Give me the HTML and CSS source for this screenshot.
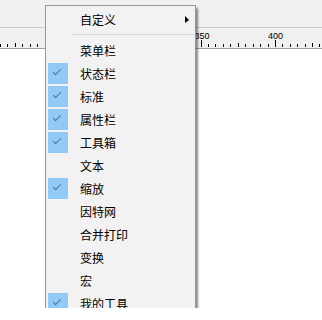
FILE: index.html
```html
<!DOCTYPE html>
<html lang="zh-CN">
<head>
    <meta charset="UTF-8">
    <title>自定义菜单</title>
    <link rel="stylesheet" href="styles.css">
</head>
<body>
    <div class="toolbar"></div>

    <div class="ruler">
        <svg class="ruler-svg" width="322" height="20" shape-rendering="crispEdges">
            <g class="tick">
                <line x1="0.5" y1="16" x2="0.5" y2="19"/>
                <line x1="7.5" y1="16" x2="7.5" y2="19"/>
                <line x1="15.5" y1="15" x2="15.5" y2="19"/>
                <line x1="22.5" y1="16" x2="22.5" y2="19"/>
                <line x1="30.5" y1="16" x2="30.5" y2="19"/>
                <line x1="37.5" y1="16" x2="37.5" y2="19"/>
                <line x1="201.5" y1="12" x2="201.5" y2="19"/>
                <line x1="208.5" y1="16" x2="208.5" y2="19"/>
                <line x1="215.5" y1="16" x2="215.5" y2="19"/>
                <line x1="223.5" y1="16" x2="223.5" y2="19"/>
                <line x1="230.5" y1="16" x2="230.5" y2="19"/>
                <line x1="238.5" y1="15" x2="238.5" y2="19"/>
                <line x1="245.5" y1="16" x2="245.5" y2="19"/>
                <line x1="253.5" y1="16" x2="253.5" y2="19"/>
                <line x1="260.5" y1="16" x2="260.5" y2="19"/>
                <line x1="268.5" y1="16" x2="268.5" y2="19"/>
                <line x1="275.5" y1="12" x2="275.5" y2="19"/>
                <line x1="282.5" y1="16" x2="282.5" y2="19"/>
                <line x1="290.5" y1="16" x2="290.5" y2="19"/>
                <line x1="297.5" y1="16" x2="297.5" y2="19"/>
                <line x1="305.5" y1="16" x2="305.5" y2="19"/>
                <line x1="312.5" y1="15" x2="312.5" y2="19"/>
                <line x1="319.5" y1="16" x2="319.5" y2="19"/>
            </g>
            <text class="ruler-label" x="202" y="10.5">350</text>
            <text class="ruler-label" x="275.5" y="10.5">400</text>
        </svg>
    </div>

    <div class="canvas"></div>

    <!-- popup menu, cut off by the bottom of the capture -->
    <div class="menu-clip">
        <ul class="menu">
            <li class="item has-sub"><span class="box"></span><span class="label">自定义</span><span class="sub-arrow"></span></li>
            <li class="separator"></li>
            <li class="item"><span class="box"></span><span class="label">菜单栏</span></li>
            <li class="item checked"><span class="box"></span><span class="label">状态栏</span></li>
            <li class="item checked"><span class="box"></span><span class="label">标准</span></li>
            <li class="item checked"><span class="box"></span><span class="label">属性栏</span></li>
            <li class="item checked"><span class="box"></span><span class="label">工具箱</span></li>
            <li class="item"><span class="box"></span><span class="label">文本</span></li>
            <li class="item checked"><span class="box"></span><span class="label">缩放</span></li>
            <li class="item"><span class="box"></span><span class="label">因特网</span></li>
            <li class="item"><span class="box"></span><span class="label">合并打印</span></li>
            <li class="item"><span class="box"></span><span class="label">变换</span></li>
            <li class="item"><span class="box"></span><span class="label">宏</span></li>
            <li class="item checked"><span class="box"></span><span class="label">我的工具</span></li>
        </ul>
    </div>
</body>
</html>
```

FILE: styles.css
```css
body { margin: 0; padding: 0; background-color: #ffffff; font-family: "Noto Sans CJK SC", "Noto Sans", sans-serif; overflow: hidden; }

.toolbar { height: 27px; background-color: #f0f0f0; border-bottom: 1px solid #cdcdcd; }
.ruler { height: 20px; background-color: #f0f0f0; border-bottom: 1px solid #a0a0a0; }
.ruler-svg { display: block; }
.tick line { stroke: #000000; stroke-width: 1; }
.ruler-label { font-family: "Liberation Sans", Arial, sans-serif; font-size: 9px; fill: #000000; text-anchor: middle; }
.canvas { height: 272px; background-color: #ffffff; }

/* Popup menu */
.menu-clip {
    position: absolute;
    left: 45px;
    top: 0;
    width: 160px;
    height: 308px;
    overflow: hidden;
}

.menu {
    list-style: none;
    margin: 5px 0 0 0;
    padding: 2px 0 0 2px;
    width: 147px;
    height: 340px;
    background-color: #f2f2f2;
    border: 1px solid #979797;
    box-shadow: 2px 3px 2px rgba(0, 0, 0, 0.45);
}

.item {
    display: flex;
    align-items: center;
    height: 23px;
    position: relative;
    font-size: 12px;
    color: #000000;
}

.box {
    width: 20px;
    height: 21px;
    margin-right: 12px;
    flex: none;
    position: relative;
}

.checked .box { background-color: #91c9f7; }

.checked .box::after {
    content: "";
    position: absolute;
    left: 5px;
    top: 6px;
    width: 7px;
    height: 3px;
    border-left: 1px solid #4d6f99;
    border-bottom: 1px solid #4d6f99;
    transform: rotate(-45deg);
}

.label { line-height: 23px; }

.sub-arrow {
    position: absolute;
    left: 137px;
    top: 8px;
    width: 0;
    height: 0;
    border-top: 4px solid transparent;
    border-bottom: 3px solid transparent;
    border-left: 4px solid #000000;
}

.separator {
    height: 8px;
    position: relative;
}

.separator::after {
    content: "";
    position: absolute;
    left: 24px;
    right: 0;
    top: 3px;
    height: 1px;
    background-color: #d7d7d7;
}
```
